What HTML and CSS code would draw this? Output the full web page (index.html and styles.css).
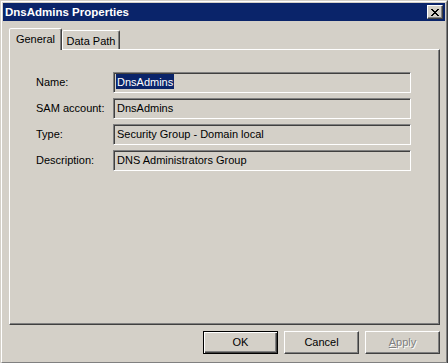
FILE: index.html
```html
<!DOCTYPE html>
<html lang="en">
<head>
    <meta charset="UTF-8">
    <title>DnsAdmins Properties</title>
    <link rel="stylesheet" href="styles.css">
</head>
<body>
    <div class="window">
        <div class="frame">
            <div class="titlebar">
                <span class="title">DnsAdmins Properties</span>
                <div class="close">
                    <svg width="8" height="7" viewBox="0 0 8 7" shape-rendering="crispEdges">
                        <path fill="#000" d="M0 0h2v1H0z M6 0h2v1H6z M1 1h2v1H1z M5 1h2v1H5z M2 2h4v1H2z M3 3h2v1H3z M2 4h4v1H2z M1 5h2v1H1z M5 5h2v1H5z M0 6h2v1H0z M6 6h2v1H6z"/>
                    </svg>
                </div>
            </div>

            <div class="content">
                <div class="tabs">
                    <div class="tab active">General</div>
                    <div class="tab tab-path">Data Path</div>
                </div>

                <div class="panel">
                    <div class="fields">
                        <label class="label">Name:</label>
                        <div class="field"><span class="sel">DnsAdmins</span></div>

                        <label class="label">SAM account:</label>
                        <div class="field">DnsAdmins</div>

                        <label class="label">Type:</label>
                        <div class="field">Security Group - Domain local</div>

                        <label class="label">Description:</label>
                        <div class="field">DNS Administrators Group</div>
                    </div>
                </div>

                <div class="actions">
                    <button class="btn default">OK</button>
                    <button class="btn">Cancel</button>
                    <button class="btn disabled"><u>A</u>pply</button>
                </div>
            </div>
        </div>
    </div>
</body>
</html>
```

FILE: styles.css
```css
body {
    margin: 0;
    background: #d4d0c8;
    font-family: "Liberation Sans", Arial, sans-serif;
    font-size: 11px;
    color: #000;
}
.window {
    width: 448px;
    height: 364px;
    box-sizing: border-box;
    border: 1px solid;
    border-color: #d4d0c8 #404040 #404040 #d4d0c8;
    background: #d4d0c8;
}
.frame {
    height: 100%;
    box-sizing: border-box;
    border: 1px solid;
    border-color: #fff #808080 #808080 #fff;
    padding: 1px;
}
.titlebar {
    height: 18px;
    background: #0a246a;
    color: #fff;
    display: flex;
    align-items: center;
    justify-content: space-between;
    padding: 0 2px;
}
.title {
    font-weight: bold;
    font-size: 11.5px;
}
.close {
    width: 16px;
    height: 14px;
    box-sizing: border-box;
    background: #d4d0c8;
    border: 1px solid;
    border-color: #fff #404040 #404040 #fff;
    box-shadow: inset -1px -1px #808080;
    display: flex;
    align-items: center;
    justify-content: center;
}
.content {
    padding: 7px 5px 0 6px;
}
.tabs {
    display: flex;
    align-items: flex-end;
    height: 21px;
}
.tab {
    box-sizing: border-box;
    height: 19px;
    border: 1px solid;
    border-bottom: none;
    border-color: #fff #404040 transparent #fff;
    border-radius: 2px 2px 0 0;
    box-shadow: inset -1px 0 #808080;
    background: #d4d0c8;
    padding-top: 3px;
    line-height: 14px;
    text-align: center;
}
.tab.active {
    position: relative;
    z-index: 1;
    width: 53px;
    height: 22px;
    margin-bottom: -1px;
}
.tab-path {
    width: 58px;
}
.panel {
    height: 276px;
    box-sizing: border-box;
    border: 1px solid;
    border-color: #fff #404040 #404040 #fff;
    box-shadow: inset -1px -1px #808080;
    padding: 22px 0 0 26px;
}
.fields {
    display: grid;
    grid-template-columns: 77px 298px;
    grid-auto-rows: 21px;
    row-gap: 5px;
}
.label {
    line-height: 21px;
}
.field {
    box-sizing: border-box;
    border: 1px solid;
    border-color: #808080 #fff #fff #808080;
    box-shadow: inset 1px 1px #404040;
    padding-left: 3px;
    line-height: 19px;
    white-space: nowrap;
}
.sel {
    background: #0a246a;
    color: #fff;
    padding: 2px 1px 1px;
    margin-left: -1px;
}
.actions {
    display: flex;
    justify-content: flex-end;
    gap: 6px;
    margin-top: 6px;
}
.btn {
    width: 75px;
    height: 23px;
    box-sizing: border-box;
    margin: 0;
    padding: 0;
    border: 1px solid;
    border-color: #fff #404040 #404040 #fff;
    box-shadow: inset -1px -1px #808080;
    background: #d4d0c8;
    font-family: inherit;
    font-size: 11px;
    line-height: 21px;
    color: #000;
}
.btn.default {
    border-color: #000;
    box-shadow: inset 1px 1px #fff, inset -1px -1px #404040, inset -2px -2px #808080;
}
.btn.disabled {
    color: #808080;
    text-shadow: 1px 1px #fff;
}
```
